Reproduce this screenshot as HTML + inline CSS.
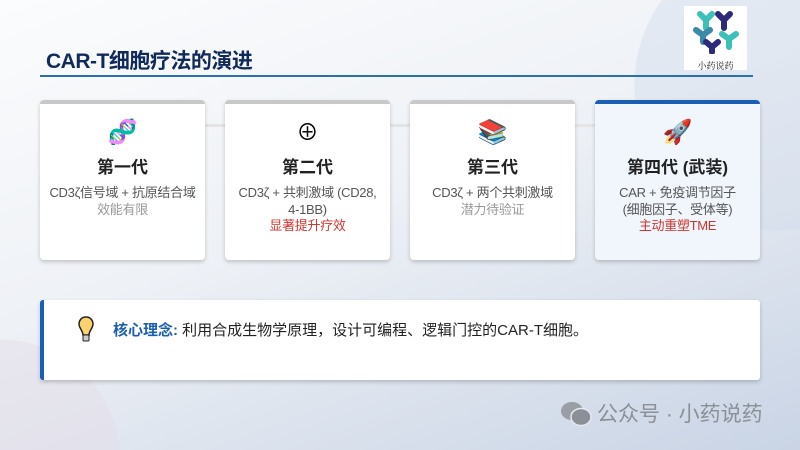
<!DOCTYPE html>
<html style="width:800px;height:450px;overflow:hidden"><head><meta charset="utf-8"><style>
*{margin:0;padding:0;box-sizing:border-box}
body{width:800px;height:450px;overflow:hidden;position:relative;font-family:"Liberation Sans","Noto Sans CJK SC",sans-serif;
background:radial-gradient(circle at 780px 85px, rgba(210,220,235,.45) 0 145px, transparent 146px),radial-gradient(circle at 0px 460px, rgba(228,222,232,.55) 0 120px, transparent 121px),linear-gradient(160deg,#fbfcfd 0%,#eef1f6 45%,#c9d4e5 100%)}
.title{position:absolute;left:46px;top:45px;font-size:21px;font-weight:bold;color:#112a5c;letter-spacing:-0.5px}
.line{position:absolute;left:40px;top:75px;width:713px;height:2px;background:#2a6fb0}
.logo{position:absolute;left:684px;top:6px;width:63px;height:64px;background:#fff}
.card{position:absolute;top:100px;width:165px;height:160px;background:#fff;border-radius:4px;box-shadow:0 2px 4px rgba(0,0,0,.2);border-top:4px solid #c8c8c8;text-align:center}
.card .ic{margin-top:14px;height:30px;font-size:24px;line-height:30px}
.card h3{font-size:17px;margin-top:8px;color:#222;line-height:24px}
.card p{font-size:13px;color:#555;line-height:16.5px;margin-top:5px;letter-spacing:-0.3px}
.g{color:#999}.r{color:#d0342c}
.conn{position:absolute;top:124px;left:40px;width:720px;height:3px;background:#e4e4e4}
.box{position:absolute;left:40px;top:300px;width:720px;height:80px;background:#fff;border-left:4px solid #1a5fb4;border-radius:3px;box-shadow:0 2px 4px rgba(0,0,0,.2)}
.box .t{position:absolute;left:69px;top:19px;font-size:15px;color:#222}
.wm{position:absolute;left:597px;top:401px;font-size:21px;line-height:28px;color:#8a8f98}
</style></head><body>
<div class="title">CAR-T细胞疗法的演进</div>
<div class="line"></div>
<div class="logo">
<svg width="63" height="48" viewBox="0 0 63 48">
<g stroke-width="6" stroke-linecap="round" fill="none">
<path d="M16 8l6 6 0 8M28 8l-6 6" stroke="#3cc0b8"/>
<path d="M34 8l6 6 6-6M40 14v8" stroke="#2d2a7a"/>
<path d="M12 24l7 5 0 7M26 24l-7 5" stroke="#3a8aa8"/>
<path d="M38 28l7 5 7-5M45 33v8" stroke="#3cc0b8"/>
<path d="M22 36l6 5 6-5M28 41v5" stroke="#2d2a7a"/>
</g></svg>
<div style="font-size:9px;text-align:center;font-family:'Noto Serif CJK SC',serif;color:#222">小药说药</div>
</div>
<div class="conn"></div>
<div class="card" style="left:40px"><div class="ic">🧬</div><h3>第一代</h3><p>CD3ζ信号域 + 抗原结合域<br><span class="g">效能有限</span></p></div>
<div class="card" style="left:225px"><div class="ic" style="font-size:22px">⊕</div><h3>第二代</h3><p>CD3ζ + 共刺激域 (CD28,<br>4-1BB)<br><span class="r">显著提升疗效</span></p></div>
<div class="card" style="left:410px"><div class="ic">📚</div><h3>第三代</h3><p>CD3ζ + 两个共刺激域<br><span class="g">潜力待验证</span></p></div>
<div class="card" style="left:595px;border-top-color:#1a5fb4;background:#f1f6fd"><div class="ic">🚀</div><h3>第四代 (武装)</h3><p>CAR + 免疫调节因子<br>(细胞因子、受体等)<br><span class="r">主动重塑TME</span></p></div>
<div class="box">
<svg style="position:absolute;left:33px;top:15px" width="18" height="30" viewBox="0 0 18 30"><path d="M9 2C4 2 2 6 2 9c0 4 4 7 4 11h6c0-4 4-7 4-11 0-3-2-7-7-7z" fill="#fcd270" stroke="#222" stroke-width="1.5"/><rect x="6" y="20" width="6" height="6" rx="1" fill="#ccc" stroke="#222"/></svg>
<div class="t"><b style="color:#1a5fb4">核心理念:</b> 利用合成生物学原理，设计可编程、逻辑门控的CAR-T细胞。</div>
</div>
<svg style="position:absolute;left:560px;top:400px" width="32" height="28" viewBox="0 0 32 28"><ellipse cx="12" cy="11" rx="11" ry="9" fill="#9a9ea5"/><ellipse cx="21" cy="17" rx="10" ry="8.5" fill="#8a8f98" stroke="#e6eaf0" stroke-width="1.5"/></svg>
<div class="wm">公众号 · 小药说药</div>
</body></html>
